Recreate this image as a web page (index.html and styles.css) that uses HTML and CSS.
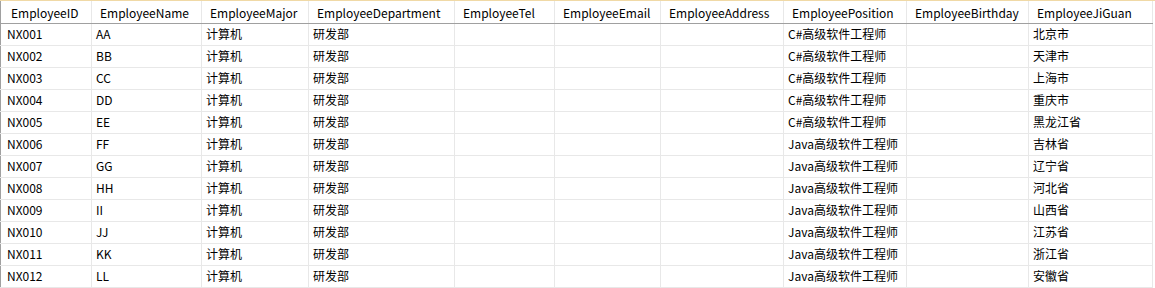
FILE: index.html
```html
<!DOCTYPE html>
<html>
<head>
<meta charset="utf-8">
<link rel="stylesheet" href="styles.css">
</head>
<body>
<div class="grid-wrap">
<table class="grid">
<colgroup>
<col class="c1"><col class="c2"><col class="c3"><col class="c4"><col class="c5"><col class="c6"><col class="c7"><col class="c8"><col class="c9"><col class="c10">
</colgroup>
<thead>
<tr><th>EmployeeID</th><th>EmployeeName</th><th>EmployeeMajor</th><th>EmployeeDepartment</th><th>EmployeeTel</th><th>EmployeeEmail</th><th>EmployeeAddress</th><th>EmployeePosition</th><th>EmployeeBirthday</th><th>EmployeeJiGuan</th></tr>
</thead>
<tbody>
<tr><td>NX001</td><td>AA</td><td>计算机</td><td>研发部</td><td></td><td></td><td></td><td>C#高级软件工程师</td><td></td><td>北京市</td></tr>
<tr><td>NX002</td><td>BB</td><td>计算机</td><td>研发部</td><td></td><td></td><td></td><td>C#高级软件工程师</td><td></td><td>天津市</td></tr>
<tr><td>NX003</td><td>CC</td><td>计算机</td><td>研发部</td><td></td><td></td><td></td><td>C#高级软件工程师</td><td></td><td>上海市</td></tr>
<tr><td>NX004</td><td>DD</td><td>计算机</td><td>研发部</td><td></td><td></td><td></td><td>C#高级软件工程师</td><td></td><td>重庆市</td></tr>
<tr><td>NX005</td><td>EE</td><td>计算机</td><td>研发部</td><td></td><td></td><td></td><td>C#高级软件工程师</td><td></td><td>黑龙江省</td></tr>
<tr><td>NX006</td><td>FF</td><td>计算机</td><td>研发部</td><td></td><td></td><td></td><td>Java高级软件工程师</td><td></td><td>吉林省</td></tr>
<tr><td>NX007</td><td>GG</td><td>计算机</td><td>研发部</td><td></td><td></td><td></td><td>Java高级软件工程师</td><td></td><td>辽宁省</td></tr>
<tr><td>NX008</td><td>HH</td><td>计算机</td><td>研发部</td><td></td><td></td><td></td><td>Java高级软件工程师</td><td></td><td>河北省</td></tr>
<tr><td>NX009</td><td>II</td><td>计算机</td><td>研发部</td><td></td><td></td><td></td><td>Java高级软件工程师</td><td></td><td>山西省</td></tr>
<tr><td>NX010</td><td>JJ</td><td>计算机</td><td>研发部</td><td></td><td></td><td></td><td>Java高级软件工程师</td><td></td><td>江苏省</td></tr>
<tr><td>NX011</td><td>KK</td><td>计算机</td><td>研发部</td><td></td><td></td><td></td><td>Java高级软件工程师</td><td></td><td>浙江省</td></tr>
<tr><td>NX012</td><td>LL</td><td>计算机</td><td>研发部</td><td></td><td></td><td></td><td>Java高级软件工程师</td><td></td><td>安徽省</td></tr>
</tbody>
</table>
</div>
</body>
</html>
```

FILE: styles.css
```css
html, body {
  margin: 0;
  padding: 0;
  background: #ffffff;
}
.grid-wrap {
  width: 1155px;
  height: 288px;
  overflow: hidden;
  border-top: 1px solid #f0d9a6;
  box-sizing: border-box;
}
.grid {
  border-collapse: collapse;
  table-layout: fixed;
  width: 1153px;
  font-family: "Noto Sans CJK SC", "Noto Sans", sans-serif;
  font-size: 12px;
  color: #000;
  border-left: 1px solid #a0a0a0;
}
.c1 { width: 91px; }
.c2 { width: 110px; }
.c3 { width: 107px; }
.c4 { width: 146px; }
.c5 { width: 100px; }
.c6 { width: 106px; }
.c7 { width: 123px; }
.c8 { width: 123px; }
.c9 { width: 122px; }
.c10 { width: 124px; }
.grid th {
  height: 22px;
  box-sizing: border-box;
  padding: 2px 0 0 8px;
  font-weight: normal;
  text-align: left;
  white-space: nowrap;
  border-right: 1px solid #e8e8e8;
  border-bottom: 1px solid #a0a0a0;
  line-height: 18px;
}
.grid td {
  height: 22px;
  box-sizing: border-box;
  padding: 0 0 0 4px;
  white-space: nowrap;
  border-right: 1px solid #e8e8e8;
  border-bottom: 1px solid #e8e8e8;
  line-height: 20px;
}
.grid th:first-child { padding-left: 10px; }
.grid td:first-child { padding-left: 6px; }
```
